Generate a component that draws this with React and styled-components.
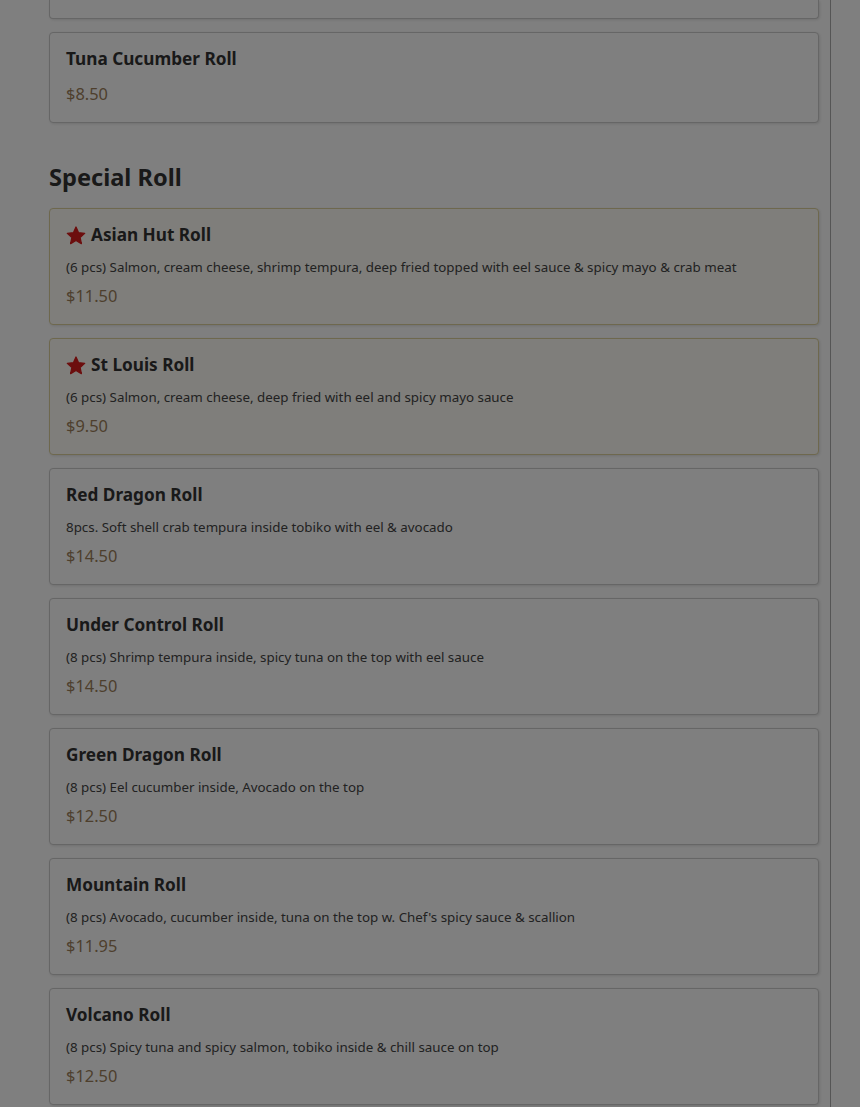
import React from 'react'
import styled, { createGlobalStyle } from 'styled-components'

const GlobalStyle = createGlobalStyle`
  body {
    margin: 0;
    background: #ffffff;
    font-family: "Noto Sans", "Open Sans", sans-serif;
    color: #333;
  }
`

const Page = styled.div`
  display: flex;
  min-height: 1107px;
  overflow: hidden;
`

const Main = styled.main`
  width: 831px;
  box-sizing: border-box;
  border-right: 1px solid #aaa;
  padding: 0 11px 40px 49px;
`

const Section = styled.section`
  display: flex;
  flex-direction: column;
  gap: 13px;
  margin-bottom: 38px;
`

const Heading = styled.h2`
  margin: 0 0 2px;
  font-size: 23.6px;
  line-height: 32px;
  font-weight: 700;
  color: #333;
`

const Card = styled.div`
  display: flex;
  flex-direction: column;
  padding: 16px 16px 17px 16px;
  border: 1px solid ${(p) => (p.$special ? '#ddd19c' : '#cccccc')};
  background: ${(p) => (p.$special ? '#fffdf6' : '#ffffff')};
  border-radius: 4px;
  box-shadow: 1px 1px 3px rgba(0, 0, 0, 0.12);
`

/* bottom of the card that is scrolled past the top edge */
const CardTail = styled.div`
  height: 19px;
  box-sizing: border-box;
  border: 1px solid #cccccc;
  border-top: none;
  border-radius: 0 0 4px 4px;
  background: #ffffff;
  box-shadow: 1px 1px 3px rgba(0, 0, 0, 0.12);
`

const Title = styled.div`
  display: flex;
  align-items: center;
  gap: 5px;
  font-size: 17.2px;
  line-height: 20px;
  font-weight: 700;
  color: #333;
  margin-bottom: 12px;
`

const Desc = styled.div`
  font-size: 13.35px;
  line-height: 20px;
  color: #444;
  margin-bottom: 8px;
`

const Price = styled.div`
  font-size: 16.4px;
  line-height: 22px;
  color: #9c7f5a;
  margin-top: ${(p) => (p.$alone ? '2px' : '0')};
`

const Overlay = styled.div`
  position: fixed;
  inset: 0;
  background: rgba(0, 0, 0, 0.5);
  pointer-events: none;
`

const Star = () => (
  <svg width="20" height="19" viewBox="0 0 24 23">
    <path
      d="M12 1.2l3.1 6.9 7.4.8-5.6 5 1.6 7.4L12 17.5l-6.5 3.8 1.6-7.4-5.6-5 7.4-.8z"
      fill="#d81c1c"
      stroke="#d81c1c"
      strokeWidth="1.6"
      strokeLinejoin="round"
    />
  </svg>
)

const basic = [{ name: 'Tuna Cucumber Roll', price: '$8.50' }]

const special = [
  { name: 'Asian Hut Roll', star: true, desc: '(6 pcs) Salmon, cream cheese, shrimp tempura, deep fried topped with eel sauce & spicy mayo & crab meat', price: '$11.50' },
  { name: 'St Louis Roll', star: true, desc: '(6 pcs) Salmon, cream cheese, deep fried with eel and spicy mayo sauce', price: '$9.50' },
  { name: 'Red Dragon Roll', desc: '8pcs. Soft shell crab tempura inside tobiko with eel & avocado', price: '$14.50' },
  { name: 'Under Control Roll', desc: '(8 pcs) Shrimp tempura inside, spicy tuna on the top with eel sauce', price: '$14.50' },
  { name: 'Green Dragon Roll', desc: '(8 pcs) Eel cucumber inside, Avocado on the top', price: '$12.50' },
  { name: 'Mountain Roll', desc: "(8 pcs) Avocado, cucumber inside, tuna on the top w. Chef's spicy sauce & scallion", price: '$11.95' },
  { name: 'Volcano Roll', desc: '(8 pcs) Spicy tuna and spicy salmon, tobiko inside & chill sauce on top', price: '$12.50' },
]

const Item = ({ item }) => (
  <Card $special={item.star}>
    <Title>
      {item.star && <Star />}
      {item.name}
    </Title>
    {item.desc && <Desc>{item.desc}</Desc>}
    <Price $alone={!item.desc}>{item.price}</Price>
  </Card>
)

const App = () => {
  return (
    <>
      <GlobalStyle />
      <Page>
        <Main>
          <Section>
            <CardTail />
            {basic.map((item) => (
              <Item key={item.name} item={item} />
            ))}
          </Section>
          <Section>
            <Heading>Special Roll</Heading>
            {special.map((item) => (
              <Item key={item.name} item={item} />
            ))}
          </Section>
        </Main>
      </Page>
      <Overlay />
    </>
  )
}

export default App
